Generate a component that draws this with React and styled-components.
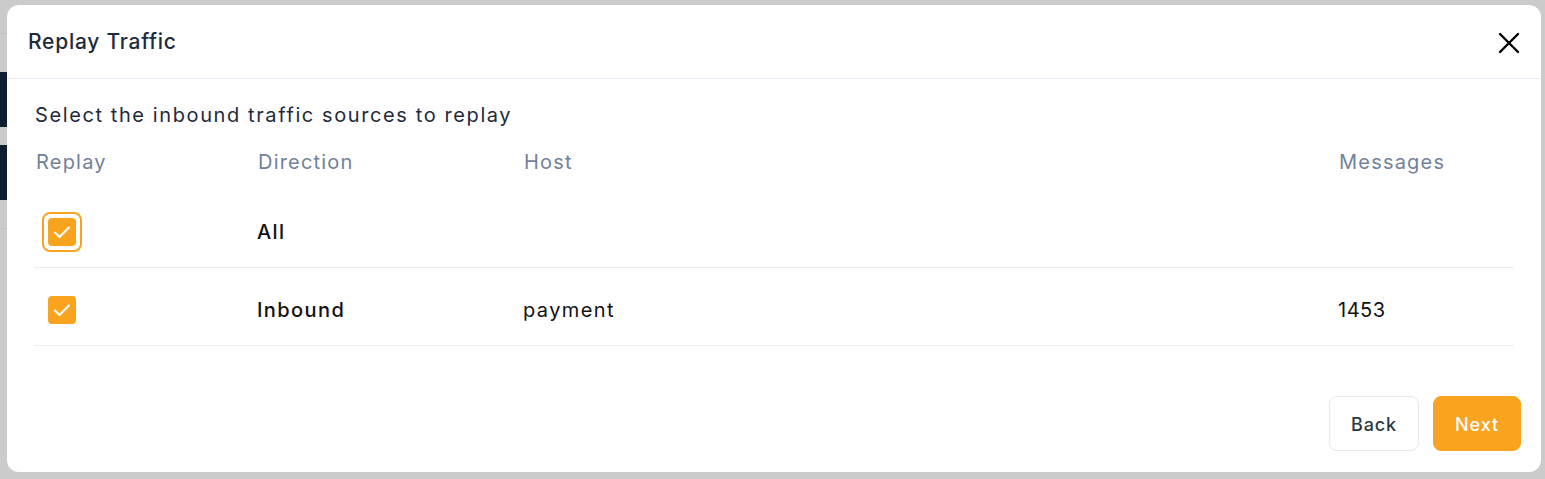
import React, { useState } from "react";
import styled, { createGlobalStyle } from "styled-components";

const GlobalStyle = createGlobalStyle`
	html, body {
		margin: 0;
		padding: 0;
		background: #cbcbcc;
		font-family: Inter, "Open Sans", "Liberation Sans", sans-serif;
	}
	* {
		box-sizing: border-box;
	}
`;

const ORANGE = "#f9a31f";

const Backdrop = styled.div`
	width: 1545px;
	height: 479px;
	padding: 5px 4px 7px 7px;
	background-color: #cbcbcc;
	background-image:
		linear-gradient(#0f1d30, #0f1d30),
		linear-gradient(#0f1d30, #0f1d30),
		linear-gradient(#bfc0c2, #bfc0c2),
		linear-gradient(#bfc0c2, #bfc0c2);
	background-size: 7px 55px, 7px 55px, 7px 1px, 7px 1px;
	background-position: 0 72px, 0 145px, 0 33px, 0 228px;
	background-repeat: no-repeat;
	display: flex;
`;

const Modal = styled.div`
	flex: 1;
	background: #ffffff;
	border-radius: 12px;
	display: flex;
	flex-direction: column;
	overflow: hidden;
`;

const Header = styled.div`
	height: 74px;
	padding: 0 20px 0 21px;
	display: flex;
	align-items: center;
	justify-content: space-between;
	border-bottom: 1px solid #e4ebf2;
`;

const Title = styled.h2`
	margin: 0;
	font-size: 21px;
	font-weight: 500;
	color: #1f2a3b;
	letter-spacing: 0.75px;
`;

const CloseButton = styled.button`
	border: none;
	background: none;
	padding: 0;
	width: 24px;
	height: 24px;
	display: flex;
	align-items: center;
	justify-content: center;
	cursor: pointer;
	margin-top: 2px;
`;

const Body = styled.div`
	padding: 22px 27px 0 27px;
	flex: 1;
`;

const Subtitle = styled.p`
	margin: 0;
	padding-left: 1px;
	font-size: 20px;
	line-height: 28px;
	color: #1f2a3b;
	letter-spacing: 1.6px;
`;

const Row = styled.div`
	display: grid;
	grid-template-columns: 222px 266px 1fr 177px;
	align-items: center;
	padding: ${(p) => (p.head ? "19px 0 14px" : "22px 0 15px")};
	border-bottom: ${(p) => (p.head ? "none" : "1px solid #e8eef4")};
`;

const HeadCell = styled.div`
	font-size: 20px;
	line-height: 28px;
	color: #72819a;
	padding-left: 2px;
	letter-spacing: 1.2px;
`;

const Cell = styled.div`
	font-size: 20px;
	line-height: 40px;
	height: 40px;
	color: #111111;
	font-weight: ${(p) => (p.bold ? 500 : 400)};
	letter-spacing: ${(p) => (p.numeric ? "0.5px" : "1.4px")};
	padding-left: 1px;
`;

const CheckRing = styled.div`
	width: 40px;
	height: 40px;
	margin-left: 8px;
	border-radius: 8px;
	border: 2px solid ${(p) => (p.focused ? ORANGE : "transparent")};
	display: flex;
	align-items: center;
	justify-content: center;
	cursor: pointer;
`;

const CheckBox = styled.div`
	width: 28px;
	height: 28px;
	border-radius: 4px;
	background: ${(p) => (p.checked ? ORANGE : "#ffffff")};
	border: ${(p) => (p.checked ? "none" : "2px solid #cbd5e0")};
	display: flex;
	align-items: center;
	justify-content: center;
`;

const Footer = styled.div`
	display: flex;
	justify-content: flex-end;
	gap: 14px;
	padding: 0 20px 21px 0;
`;

const Button = styled.button`
	height: 55px;
	width: ${(p) => p.width}px;
	border-radius: 8px;
	font-family: inherit;
	font-size: 18px;
	font-weight: 500;
	letter-spacing: 0.9px;
	cursor: pointer;
	padding: 1px 0 0;
	border: 1px solid ${(p) => (p.primary ? ORANGE : "#e2e8f0")};
	background: ${(p) => (p.primary ? ORANGE : "#ffffff")};
	color: ${(p) => (p.primary ? "#ffffff" : "#2d3748")};
`;

const Check = () => (
	<svg width="18" height="14" viewBox="0 0 18 14" fill="none">
		<path
			d="M2 7.5L6.5 12L16 2.5"
			stroke="#ffffff"
			strokeWidth="2"
			strokeLinecap="round"
			strokeLinejoin="round"
		/>
	</svg>
);

const Checkbox = ({ checked, focused, onClick }) => (
	<CheckRing focused={focused} onClick={onClick}>
		<CheckBox checked={checked}>{checked && <Check />}</CheckBox>
	</CheckRing>
);

const App = () => {
	const [inbound, setInbound] = useState(true);

	return (
		<>
			<GlobalStyle />
			<Backdrop>
				<Modal>
					<Header>
						<Title>Replay Traffic</Title>
						<CloseButton aria-label="close">
							<svg width="22" height="22" viewBox="0 0 22 22">
								<path
									d="M2 2L20 20M20 2L2 20"
									stroke="#000000"
									strokeWidth="2.4"
									strokeLinecap="round"
								/>
							</svg>
						</CloseButton>
					</Header>
					<Body>
						<Subtitle>Select the inbound traffic sources to replay</Subtitle>
						<Row head>
							<HeadCell>Replay</HeadCell>
							<HeadCell>Direction</HeadCell>
							<HeadCell>Host</HeadCell>
							<HeadCell>Messages</HeadCell>
						</Row>
						<Row>
							<Checkbox
								checked={inbound}
								focused
								onClick={() => setInbound(!inbound)}
							/>
							<Cell bold>All</Cell>
							<Cell />
							<Cell />
						</Row>
						<Row>
							<Checkbox checked={inbound} onClick={() => setInbound(!inbound)} />
							<Cell bold>Inbound</Cell>
							<Cell>payment</Cell>
							<Cell numeric>1453</Cell>
						</Row>
					</Body>
					<Footer>
						<Button width={90}>Back</Button>
						<Button primary width={88}>
							Next
						</Button>
					</Footer>
				</Modal>
			</Backdrop>
		</>
	);
};

export default App;
